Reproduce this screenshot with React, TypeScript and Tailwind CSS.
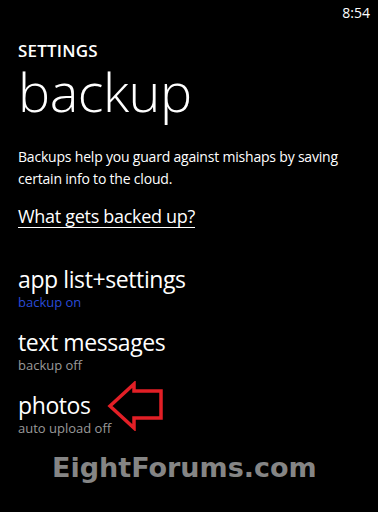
const items = [
  { title: "app list+settings", status: "backup on", statusClass: "text-[#2a4bd7]" },
  { title: "text messages", status: "backup off", statusClass: "text-[#9a9a9a]" },
  { title: "photos", status: "auto upload off", statusClass: "text-[#9a9a9a]", arrow: true },
];

const RedArrow = () => (
  <svg width="56" height="50" viewBox="0 0 56 50" className="absolute left-[89px] top-[-10px]">
    <path
      d="M3 25 L27 3 L27 10 L54 10 L54 37 L27 37 L27 47 Z"
      fill="none"
      stroke="#e21f26"
      strokeWidth="3.5"
      strokeLinejoin="miter"
    />
  </svg>
);

const App = () => {
  return (
    <div className="relative h-[512px] w-[378px] overflow-hidden bg-black font-['Open_Sans',sans-serif] text-white">
      <div className="flex justify-end pr-[8px] pt-[2px] text-[14px]">8:54</div>
      <div className="pl-[18px]">
        <h1 className="mt-[18px] text-[17px] font-semibold leading-[20px] tracking-[0.2px]">SETTINGS</h1>
        <h2 className="mt-[-2px] text-[54px] font-light leading-[64px] tracking-[-0.5px]">backup</h2>
        <p className="mt-[23px] pr-[30px] text-[14px] leading-[22px] tracking-[-0.2px]">
          Backups help you guard against mishaps by saving certain info to the cloud.
        </p>
        <a className="mt-[13px] block text-[18px] leading-[26px] tracking-[-0.3px] underline underline-offset-[4px]">
          What gets backed up?
        </a>
        <ul className="mt-[36px] flex flex-col gap-[18px]">
          {items.map((item) => (
            <li key={item.title} className="relative">
              <p className="text-[23px] leading-[28px] tracking-[-0.4px]">{item.title}</p>
              <p className={`mt-[1px] text-[13px] leading-[16px] ${item.statusClass}`}>{item.status}</p>
              {item.arrow && <RedArrow />}
            </li>
          ))}
        </ul>
      </div>
      <div className="mt-[16px] pl-[52px] font-['DejaVu_Sans',sans-serif] text-[27px] font-bold leading-[32px] text-[#858585]">
        EightForums.com
      </div>
    </div>
  );
};

export default App;
